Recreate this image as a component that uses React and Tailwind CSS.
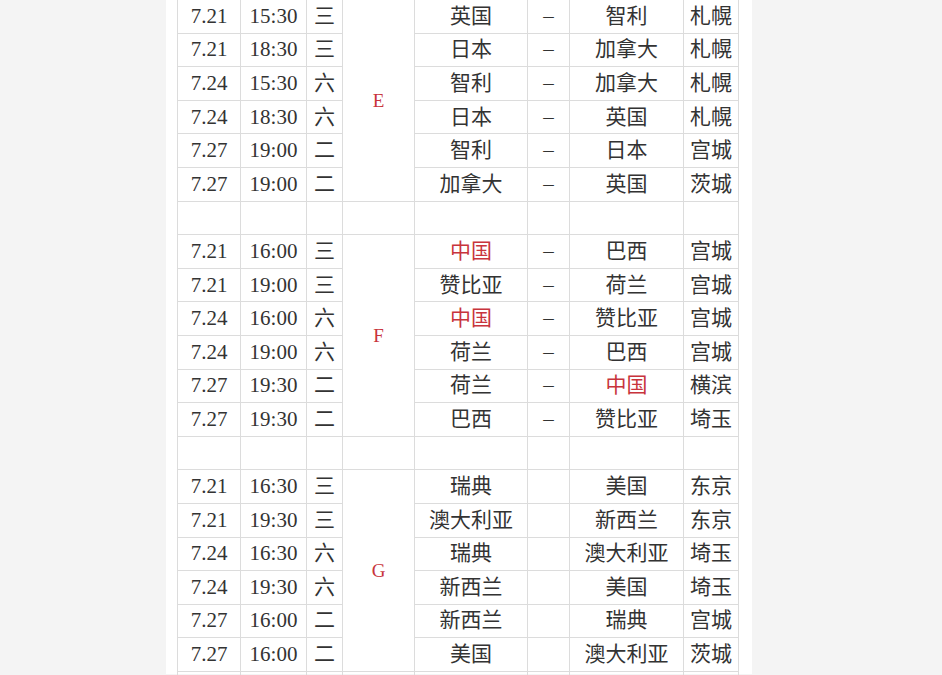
const groups = [
  {
    name: "E",
    dash: true,
    rows: [
      ["7.21", "15:30", "三", "英国", "智利", "札幌"],
      ["7.21", "18:30", "三", "日本", "加拿大", "札幌"],
      ["7.24", "15:30", "六", "智利", "加拿大", "札幌"],
      ["7.24", "18:30", "六", "日本", "英国", "札幌"],
      ["7.27", "19:00", "二", "智利", "日本", "宫城"],
      ["7.27", "19:00", "二", "加拿大", "英国", "茨城"],
    ],
  },
  {
    name: "F",
    dash: true,
    rows: [
      ["7.21", "16:00", "三", "中国", "巴西", "宫城"],
      ["7.21", "19:00", "三", "赞比亚", "荷兰", "宫城"],
      ["7.24", "16:00", "六", "中国", "赞比亚", "宫城"],
      ["7.24", "19:00", "六", "荷兰", "巴西", "宫城"],
      ["7.27", "19:30", "二", "荷兰", "中国", "横滨"],
      ["7.27", "19:30", "二", "巴西", "赞比亚", "埼玉"],
    ],
  },
  {
    name: "G",
    dash: false,
    rows: [
      ["7.21", "16:30", "三", "瑞典", "美国", "东京"],
      ["7.21", "19:30", "三", "澳大利亚", "新西兰", "东京"],
      ["7.24", "16:30", "六", "瑞典", "澳大利亚", "埼玉"],
      ["7.24", "19:30", "六", "新西兰", "美国", "埼玉"],
      ["7.27", "16:00", "二", "新西兰", "瑞典", "宫城"],
      ["7.27", "16:00", "二", "美国", "澳大利亚", "茨城"],
    ],
  },
];

const td = "border border-[#dcdcdc] text-center p-0 whitespace-nowrap";

function Team({ name }) {
  return <span className={name === "中国" ? "text-[#c8343c]" : ""}>{name}</span>;
}

function BlankRow() {
  return (
    <tr className="h-[33.6px]">
      {Array.from({ length: 8 }).map((_, i) => (
        <td key={i} className={td}></td>
      ))}
    </tr>
  );
}

export default function App() {
  return (
    <div className="h-[675px] overflow-hidden bg-[#f4f4f4]">
      <div className="ml-[166px] h-full w-[586px] bg-white pl-[11px]">
        <table
          className="-mt-px table-fixed border-collapse text-[21px] leading-none text-[#333]"
          style={{ width: 561, fontFamily: '"Liberation Serif", "Noto Sans CJK SC", serif' }}
        >
          <colgroup>
            <col className="w-[63px]" />
            <col className="w-[66px]" />
            <col className="w-[36px]" />
            <col className="w-[72px]" />
            <col className="w-[113px]" />
            <col className="w-[42px]" />
            <col className="w-[114px]" />
            <col className="w-[55px]" />
          </colgroup>
          <tbody>
            {groups.map((g, gi) => (
              <>
                {g.rows.map((r, ri) => (
                  <tr key={g.name + ri} className="h-[33.6px]">
                    <td className={td}>{r[0]}</td>
                    <td className={td}>{r[1]}</td>
                    <td className={td}>{r[2]}</td>
                    {ri === 0 && (
                      <td rowSpan={6} className={td + " text-[19px] text-[#c8343c]"}>
                        {g.name}
                      </td>
                    )}
                    <td className={td}>
                      <Team name={r[3]} />
                    </td>
                    <td className={td}>{g.dash ? "–" : ""}</td>
                    <td className={td}>
                      <Team name={r[4]} />
                    </td>
                    <td className={td}>{r[5]}</td>
                  </tr>
                ))}
                <BlankRow key={"b" + gi} />
              </>
            ))}
          </tbody>
        </table>
      </div>
    </div>
  );
}
